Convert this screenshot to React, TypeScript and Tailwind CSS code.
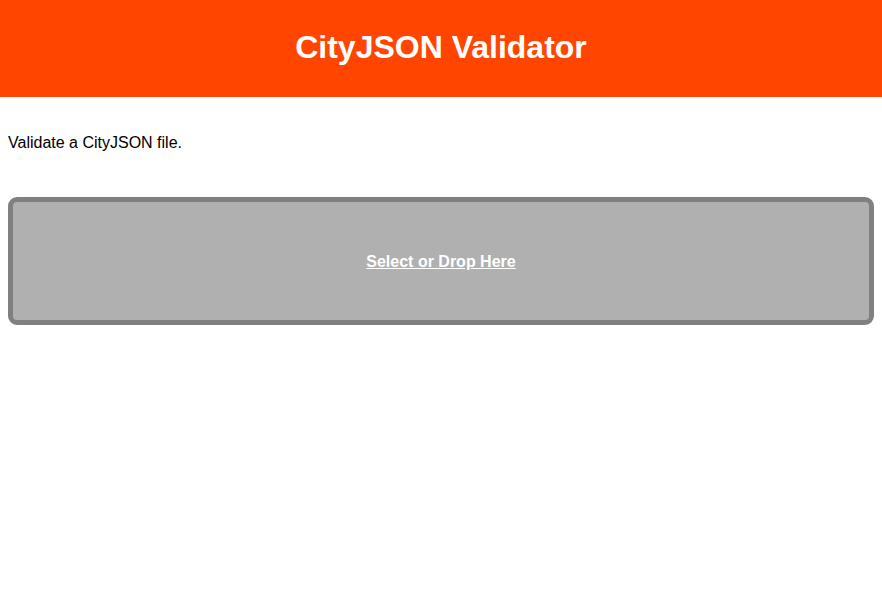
export default function App() {
    return (
        <div className="min-h-screen bg-white font-['Liberation_Sans',Arial,sans-serif] text-black">
            <header className="h-[97px] pb-1 bg-[#ff4500] flex items-center justify-center">
                <h1 className="text-[32px] font-bold text-white leading-none">CityJSON Validator</h1>
            </header>
            <main className="px-2">
                <p className="mt-[37px] text-base leading-[18px]">Validate a CityJSON file.</p>
                <div className="mt-[45px] h-[128px] pt-[2px] rounded-[9px] border-[5px] border-[#808080] bg-[#b0b0b0] flex items-center justify-center">
                    <span className="text-white font-bold underline text-base">Select or Drop Here</span>
                </div>
            </main>
        </div>
    );
}
